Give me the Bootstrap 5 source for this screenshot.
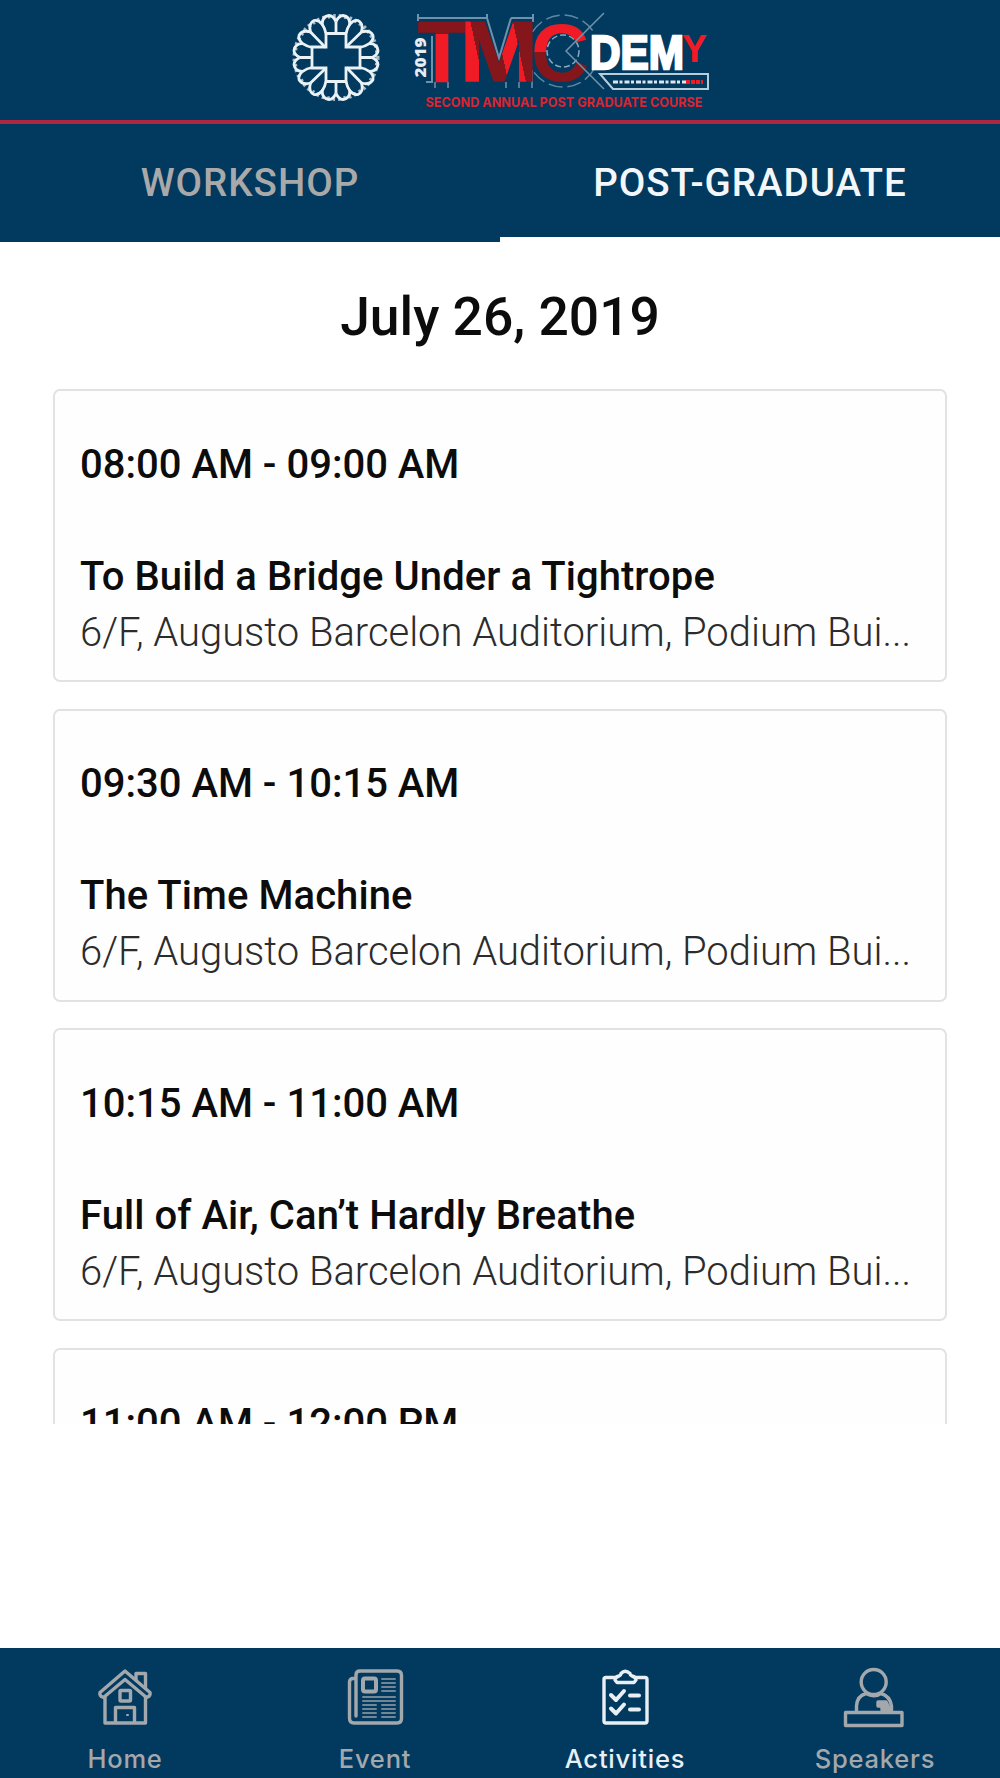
<!DOCTYPE html>
<html lang="en">
<head>
    <meta charset="UTF-8">
    <meta name="viewport" content="width=device-width, initial-scale=1.0">
    <link rel="stylesheet" href="https://cdn.jsdelivr.net/npm/bootstrap@5.3.2/dist/css/bootstrap.min.css">
    <title>Activities</title>
    <style>
        :root { --navy: #02395f; --off: #a3a8ad; }
        body { font-family: Roboto, "Liberation Sans", sans-serif; color: #0c0c0c; background: #fff; }
        .app-head { height: 124px; background: var(--navy); border-bottom: 4px solid #ad2740; }
        .app-head svg { display: block; }
        .tabs-bar { height: 118px; background: var(--navy); }
        .tabs-bar .nav-link { height: 118px; border-radius: 0; padding: 0; line-height: 118px; font-size: 38.5px; font-weight: 500; letter-spacing: 1px; color: #a9a9a9; border-bottom: 5px solid var(--navy); }
        .tabs-bar .nav-link.active { color: #f4f7fa; background: none; border-color: #fff; }
        .day { font-size: 53.4px; font-weight: 500; line-height: 64px; padding-top: 43px; height: 147px; }
        .agenda { height: 1035px; padding: 0 53px; gap: 26.7px; }
        .agenda .card { flex: none; height: 293px; border: 2px solid #e2e2e2; border-radius: 7px; background: #fefefe; color: inherit; }
        .agenda .card-body { padding: 49.5px 26px 0 25px; }
        .agenda h5 { font-size: 40px; font-weight: 500; line-height: 48px; margin: 0; letter-spacing: .07px; }
        .agenda .hour { margin-bottom: 64px; letter-spacing: 0; }
        .agenda p { font-size: 40px; font-weight: 300; line-height: 56px; margin: 4px 0 0; color: #2c2c2c; letter-spacing: -.03px; }
        .foot { height: 130px; background: var(--navy); color: var(--off); font: 500 25.5px/30px Inter, sans-serif; letter-spacing: .8px; }
        .foot a { color: inherit; text-decoration: none; padding-top: 21px; }
        .foot a.on { color: #e8eff5; }
        .foot svg { display: block; margin: 0 auto 19px; overflow: visible; fill: none; stroke: currentColor; stroke-width: 3.4; stroke-linejoin: round; stroke-linecap: round; }
    </style>
</head>
<body>
    <div class="d-flex flex-column vh-100 overflow-hidden">
        <header class="app-head">
            <svg width="1000" height="120" viewBox="0 0 1000 120">
                <defs>
                    <g id="quarter">
                        <path d="M0-24V-36M10-24Q11-29 13.8-33.3M10-10.500L25.500-25.500M24-10Q29-11 33.300-13.800"/>
                        <path d="M0-36Q3-42 7-42Q14-41 13.800-33.300Q18-38 22-37Q28-34 25.500-25.500Q34-28 37-22Q38-18 33.300-13.800Q41-14 42-7Q42-3 36 0"/>
                    </g>
                    <linearGradient id="tFill" gradientUnits="userSpaceOnUse" x1="0" y1="22" x2="0" y2="82">
                        <stop offset=".2" stop-color="#85161b"/><stop offset=".2" stop-color="#f01b24"/>
                    </linearGradient>
                    <linearGradient id="cFill" gradientUnits="userSpaceOnUse" x1="0" y1="22" x2="0" y2="82">
                        <stop offset=".5" stop-color="#f01b24"/><stop offset=".5" stop-color="#85161b"/>
                    </linearGradient>
                    <linearGradient id="mFill" gradientUnits="userSpaceOnUse" x1="464" y1="60" x2="534" y2="45">
                        <stop offset=".2" stop-color="#f01b24"/><stop offset=".2" stop-color="#85161b"/>
                        <stop offset=".54" stop-color="#85161b"/><stop offset=".54" stop-color="#f01b24"/>
                        <stop offset=".78" stop-color="#f01b24"/><stop offset=".78" stop-color="#85161b"/>
                    </linearGradient>
                </defs>
                <g transform="translate(336 57.500)" fill="none" stroke="#eaf2f6" stroke-width="2.800">
                    <path d="M-10-24H10V-10.500H24V10.500H10V24H-10V10.500H-24V-10.500H-10Z"/>
                    <use href="#quarter"/>
                    <use href="#quarter" transform="rotate(90)"/>
                    <use href="#quarter" transform="rotate(180)"/>
                    <use href="#quarter" transform="rotate(270)"/>
                    <circle r="41.500" stroke-width="4" stroke-dasharray="2.500 3" opacity=".7"/>
                </g>
                <g fill="none" stroke="#8aa9bd" stroke-width="2">
                    <path d="M418 14V21M418 18H487V14M487 18L499 58L511 18M511 18H533V14V22M432 36V82H426" opacity=".8"/>
                    <path d="M435 82V88M448 82V88M506 82V88M519 82V88M532 70V88" opacity=".6"/>
                    <circle cx="563" cy="51" r="36" stroke-width="1.500" stroke-dasharray="14 5" opacity=".7"/>
                    <circle cx="563" cy="51" r="16" stroke-width="1.500" stroke-dasharray="6 3"/>
                </g>
                <g font-family="Liberation Sans" font-weight="bold" stroke-width="1.500">
                    <text x="418" y="81" font-size="86" textLength="48" lengthAdjust="spacingAndGlyphs" fill="url(#tFill)" stroke="url(#tFill)">T</text>
                    <text x="460" y="81" font-size="86" textLength="78" lengthAdjust="spacingAndGlyphs" fill="url(#mFill)" stroke="url(#mFill)">M</text>
                    <text x="531" y="80.500" font-size="82" textLength="58" lengthAdjust="spacingAndGlyphs" fill="url(#cFill)">C</text>
                </g>
                <path d="M604 13L566 51L604 89" fill="none" stroke="#6f93ab" stroke-width="1.500"/>
                <text transform="translate(425.500 77.500) rotate(-90)" font-family="Open Sans" font-weight="800" font-size="16" textLength="40" lengthAdjust="spacingAndGlyphs" fill="#e6eef3">2019</text>
                <text x="590" y="68.500" font-family="Liberation Sans" font-weight="bold" font-size="48" textLength="94" lengthAdjust="spacingAndGlyphs" fill="#fff" stroke="#fff" stroke-width="2.500">DEM</text>
                <text x="682" y="62" font-family="Liberation Sans" font-weight="bold" font-size="39" textLength="25" lengthAdjust="spacingAndGlyphs" fill="#f01b24">Y</text>
                <path d="M600 74H708V89H613Z" fill="none" stroke="#b9cdd9" stroke-width="2"/>
                <path d="M613 82H686" stroke="#dbe6ed" stroke-width="3" stroke-dasharray="5 1.500 3 2"/>
                <path d="M686 82H703" stroke="#f01b24" stroke-width="4" stroke-dasharray="4 1"/>
                <text x="425.500" y="107" font-family="Inter" font-weight="700" font-size="13.500" textLength="277" lengthAdjust="spacingAndGlyphs" fill="#dc2330">SECOND ANNUAL POST GRADUATE COURSE</text>
            </svg>
        </header>

        <nav class="nav nav-fill tabs-bar flex-nowrap">
            <div class="nav-item w-50"><a class="nav-link">WORKSHOP</a></div>
            <div class="nav-item w-50"><a class="nav-link active">POST-GRADUATE</a></div>
        </nav>

        <div class="day text-center">July 26, 2019</div>

        <main class="agenda d-flex flex-column overflow-hidden">
            <div class="card"><div class="card-body">
                <h5 class="hour">08:00 AM - 09:00 AM</h5>
                <h5>To Build a Bridge Under a Tightrope</h5>
                <p class="text-truncate">6/F, Augusto Barcelon Auditorium, Podium Bui...</p>
            </div></div>
            <div class="card"><div class="card-body">
                <h5 class="hour">09:30 AM - 10:15 AM</h5>
                <h5>The Time Machine</h5>
                <p class="text-truncate">6/F, Augusto Barcelon Auditorium, Podium Bui...</p>
            </div></div>
            <div class="card"><div class="card-body">
                <h5 class="hour">10:15 AM - 11:00 AM</h5>
                <h5>Full of Air, Can’t Hardly Breathe</h5>
                <p class="text-truncate">6/F, Augusto Barcelon Auditorium, Podium Bui...</p>
            </div></div>
            <div class="card"><div class="card-body">
                <h5 class="hour">11:00 AM - 12:00 PM</h5>
            </div></div>
        </main>

        <footer class="foot row g-0 mt-auto text-center">
            <a class="col">
                <svg width="56" height="56" viewBox="0 0 56 56">
                    <path d="M28 2L53 23.500Q54 27 49.500 28.500L28 10.500L6.500 28.500Q2 27 3 23.500Z"/>
                    <path d="M8 28V54H48.500V28M39 11V4.500H48.500V19M18.500 54V38.500H37.500V54"/>
                    <rect x="23" y="21.500" width="10.500" height="10.500" rx="1"/>
                    <path d="M30 46H31" stroke-width="2"/>
                </svg>
                <span>Home</span>
            </a>
            <a class="col">
                <svg width="56" height="56" viewBox="0 0 56 56">
                    <path d="M9 9V6Q9 2 13 2H50Q54.500 2 54.500 6.500V49.500Q54.500 54 50 54H7Q2.500 54 2.500 49V13Q2.500 9.500 6 9.500H9V47"/>
                    <rect x="16" y="9.500" width="13" height="13" rx="2" stroke-width="4"/>
                    <path d="M35 10H48M35 14H48M35 18H48M35 22H48M16 28H48M16 32H48M16 36H29M35 36H48M16 40H29M35 40H48M16 44H29M35 44H48M16 48H29M35 48H48" stroke-width="2" opacity=".7"/>
                </svg>
                <span>Event</span>
            </a>
            <a class="col on">
                <svg width="56" height="56" viewBox="0 0 56 56">
                    <path d="M19 8.500H9Q7 8.500 7 10.500V52Q7 54 9 54H48Q50 54 50 52V10.500Q50 8.500 48 8.500H38"/>
                    <path d="M18 11Q18 8 22 7Q24 6 24 4.500Q28 0 33 4.500Q33 6 35 7Q39 8 39 11L37 13.500H20Z"/>
                    <path d="M14 26L19 31L27 22M33 26.500H42M14 39.500L19 44.500L27 35.500M33 40.500H42" stroke-width="4"/>
                </svg>
                <span>Activities</span>
            </a>
            <a class="col">
                <svg width="56" height="56" viewBox="0 0 56 56">
                    <circle cx="26.700" cy="13" r="12.500"/>
                    <path d="M9.500 42V37Q10 27 19 24.500Q27 29 34 24.500Q43 27 44.500 37V42M-1.500 43.500H55V56.500H-1.500Z"/>
                    <path d="M31 33H39L43 41H35V37H31Z" fill="currentColor"/>
                </svg>
                <span>Speakers</span>
            </a>
        </footer>
    </div>
    <script src="https://cdn.jsdelivr.net/npm/bootstrap@5.3.2/dist/js/bootstrap.bundle.min.js"></script>
</body>
</html>
